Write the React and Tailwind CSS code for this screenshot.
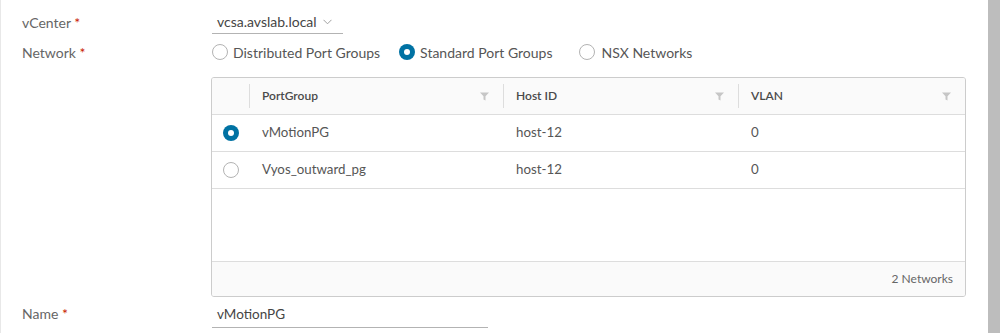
import React from 'react';

const font = { fontFamily: 'Lato, "Open Sans", sans-serif' };

function Radio({ checked, className = '' }) {
  if (checked) {
    return (
      <span className={`inline-flex w-[16px] h-[16px] rounded-full bg-[#0072a3] items-center justify-center shrink-0 ${className}`}>
        <span className="w-[6px] h-[6px] rounded-full bg-white" />
      </span>
    );
  }
  return <span className={`inline-block w-[16px] h-[16px] rounded-full border border-[#b3b3b3] bg-white shrink-0 ${className}`} />;
}

function Filter() {
  return (
    <svg width="9" height="9" viewBox="0 0 9 9" className="shrink-0">
      <path d="M0 0.5 H9 L5.5 4.2 V8.5 L3.5 7.5 V4.2 Z" fill="#c6c6c6" />
    </svg>
  );
}

function Label({ children }) {
  return (
    <div className="w-[211px] pl-[21px] text-[14px] text-[#666] shrink-0">
      {children} <span className="text-[#c92100]">*</span>
    </div>
  );
}

const rows = [
  { name: 'vMotionPG', host: 'host-12', vlan: '0', checked: true },
  { name: 'Vyos_outward_pg', host: 'host-12', vlan: '0', checked: false },
];

export default function App() {
  return (
    <div className="w-[1000px] h-[333px] bg-white flex overflow-hidden" style={font}>
      <div className="flex-1 flex flex-col border-l border-[#e8e8e8]">
        <div className="flex items-center h-[42px] pt-[2px]">
          <Label>vCenter</Label>
          <div className="w-[131px] h-[24px] border-b border-[#b3b3b3] flex items-center pl-[5px] text-[14px] text-[#454545]">
            <span>vcsa.avslab.local</span>
            <svg width="9" height="6" viewBox="0 0 9 6" className="ml-[6px]">
              <path d="M0.5 0.8 L4.5 4.8 L8.5 0.8" fill="none" stroke="#a0a0a0" strokeWidth="1" />
            </svg>
          </div>
        </div>
        <div className="flex items-center h-[20px]">
          <Label>Network</Label>
          <div className="flex items-center text-[14px] text-[#565656]">
            <Radio />
            <span className="ml-[5px]">Distributed Port Groups</span>
            <Radio checked className="ml-[19px]" />
            <span className="ml-[5px]">Standard Port Groups</span>
            <Radio className="ml-[27px]" />
            <span className="ml-[6px]">NSX Networks</span>
          </div>
        </div>
        <div className="flex mt-[15px]">
          <div className="w-[210px] shrink-0" />
          <div className="w-[755px] h-[220px] border border-[#ccc] rounded-[3px] flex flex-col overflow-hidden text-[13.3px] text-[#565656]">
            <div className="flex h-[37px] bg-[#fafafa] border-b border-[#ddd] items-center text-[12px] font-semibold text-[#4a4a4a]">
              <div className="w-[38px] h-[24px] border-r border-[#ddd]" />
              <div className="w-[253px] flex items-center justify-between pl-[12px] pr-[14px]">
                <span>PortGroup</span>
                <Filter />
              </div>
              <div className="w-[235px] h-[24px] border-l border-[#ddd] flex items-center justify-between pl-[12px] pr-[14px]">
                <span>Host ID</span>
                <Filter />
              </div>
              <div className="flex-1 h-[24px] border-l border-[#ddd] flex items-center justify-between pl-[12px] pr-[14px]">
                <span>VLAN</span>
                <Filter />
              </div>
            </div>
            {rows.map((r) => (
              <div key={r.name} className="flex h-[37px] border-b border-[#ddd] items-center">
                <div className="w-[38px] flex justify-center">
                  <Radio checked={r.checked} />
                </div>
                <div className="w-[253px] pl-[12px]">{r.name}</div>
                <div className="w-[235px] pl-[13px]">{r.host}</div>
                <div className="flex-1 pl-[13px]">{r.vlan}</div>
              </div>
            ))}
            <div className="flex-1 border-b border-[#ddd]" />
            <div className="h-[34px] bg-[#fafafa] flex items-center justify-end pr-[12px] text-[12px] text-[#666]">
              2 Networks
            </div>
          </div>
        </div>
        <div className="flex items-center mt-[1px] h-[30px]">
          <Label>Name</Label>
          <div className="w-[276px] h-[26px] border-b border-[#b3b3b3] flex items-center pl-[5px] text-[13.5px] text-[#454545] mt-[4px]">
            vMotionPG
          </div>
        </div>
      </div>
      <div className="w-[23px] bg-white" />
      <div className="w-[12px] bg-[#bdbdbd]" />
    </div>
  );
}
